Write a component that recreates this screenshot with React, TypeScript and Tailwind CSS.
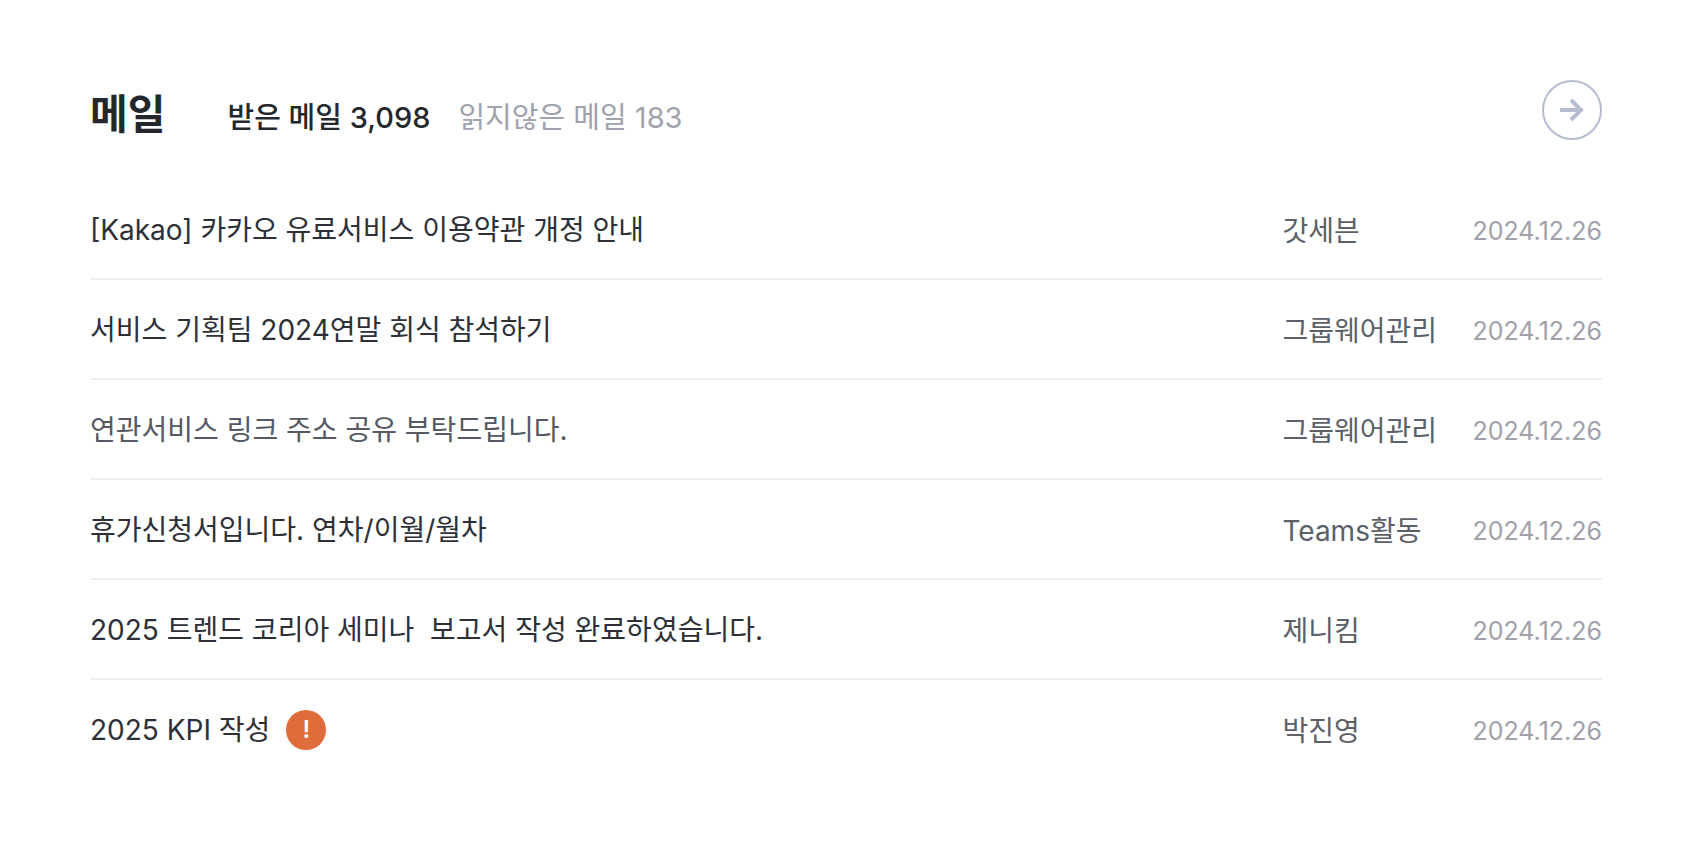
import React from 'react';

interface Mail {
  id: number;
  title: string;
  sender: string;
  date: string;
  read?: boolean;
  important?: boolean;
}

const mails: Mail[] = [
  { id: 1, title: '[Kakao] 카카오 유료서비스 이용약관 개정 안내', sender: '갓세븐', date: '2024.12.26' },
  { id: 2, title: '서비스 기획팀 2024연말 회식 참석하기', sender: '그룹웨어관리', date: '2024.12.26' },
  { id: 3, title: '연관서비스 링크 주소 공유 부탁드립니다.', sender: '그룹웨어관리', date: '2024.12.26', read: true },
  { id: 4, title: '휴가신청서입니다. 연차/이월/월차', sender: 'Teams활동', date: '2024.12.26' },
  { id: 5, title: '2025 트렌드 코리아 세미나  보고서 작성 완료하였습니다.', sender: '제니킴', date: '2024.12.26' },
  { id: 6, title: '2025 KPI 작성', sender: '박진영', date: '2024.12.26', important: true },
];

const MailRow: React.FC<{ mail: Mail }> = ({ mail }) => {
  return (
    <li className="flex h-[100px] items-center border-b-2 border-[#edeff3] pt-0.5 last:border-transparent">
      <a href="#" className={`flex min-w-0 flex-1 items-center gap-4 whitespace-pre text-[28px] ${mail.read ? 'text-[#555963]' : 'text-[#2d3037]'}`}>
        {mail.title}
        {mail.important && (
          <span className="flex size-10 items-center justify-center rounded-full bg-[#df6d3c] text-2xl font-semibold text-white">!</span>
        )}
      </a>
      <div className="flex shrink-0 items-center pt-0.5">
        <span className="w-[190px] whitespace-nowrap text-[28px] text-[#5c6068]">{mail.sender}</span>
        <time className="pt-0.5 text-[25px] text-[#a0a1aa]">{mail.date}</time>
      </div>
    </li>
  );
};

const App: React.FC = () => {
  return (
    <section className="min-h-screen bg-white px-[90px] pt-20 font-['Inter','Noto_Sans_CJK_KR',sans-serif]">
      <header className="flex h-[60px] items-center justify-between">
        <div className="flex items-center">
          <h2 className="mr-[62px] pt-2.5 text-[41px] font-bold text-[#24272c]">메일</h2>
          <div className="flex gap-7 pt-4 text-[29px]">
            <button type="button" className="font-medium text-[#24272c]">받은 메일 3,098</button>
            <button type="button" className="text-[#a0a2ae]">읽지않은 메일 183</button>
          </div>
        </div>
        <button type="button" aria-label="메일 더보기" className="flex size-[60px] items-center justify-center rounded-full border-2 border-[#b5bccf] text-[#b5bccf]">
          <svg className="size-8" viewBox="0 0 32 32" fill="none" stroke="currentColor" strokeWidth="4">
            <path d="M4 16h21M15 6l10 10-10 10" />
          </svg>
        </button>
      </header>
      <ul className="mt-10">
        {mails.map((mail) => (
          <MailRow key={mail.id} mail={mail} />
        ))}
      </ul>
    </section>
  );
};

export default App;
